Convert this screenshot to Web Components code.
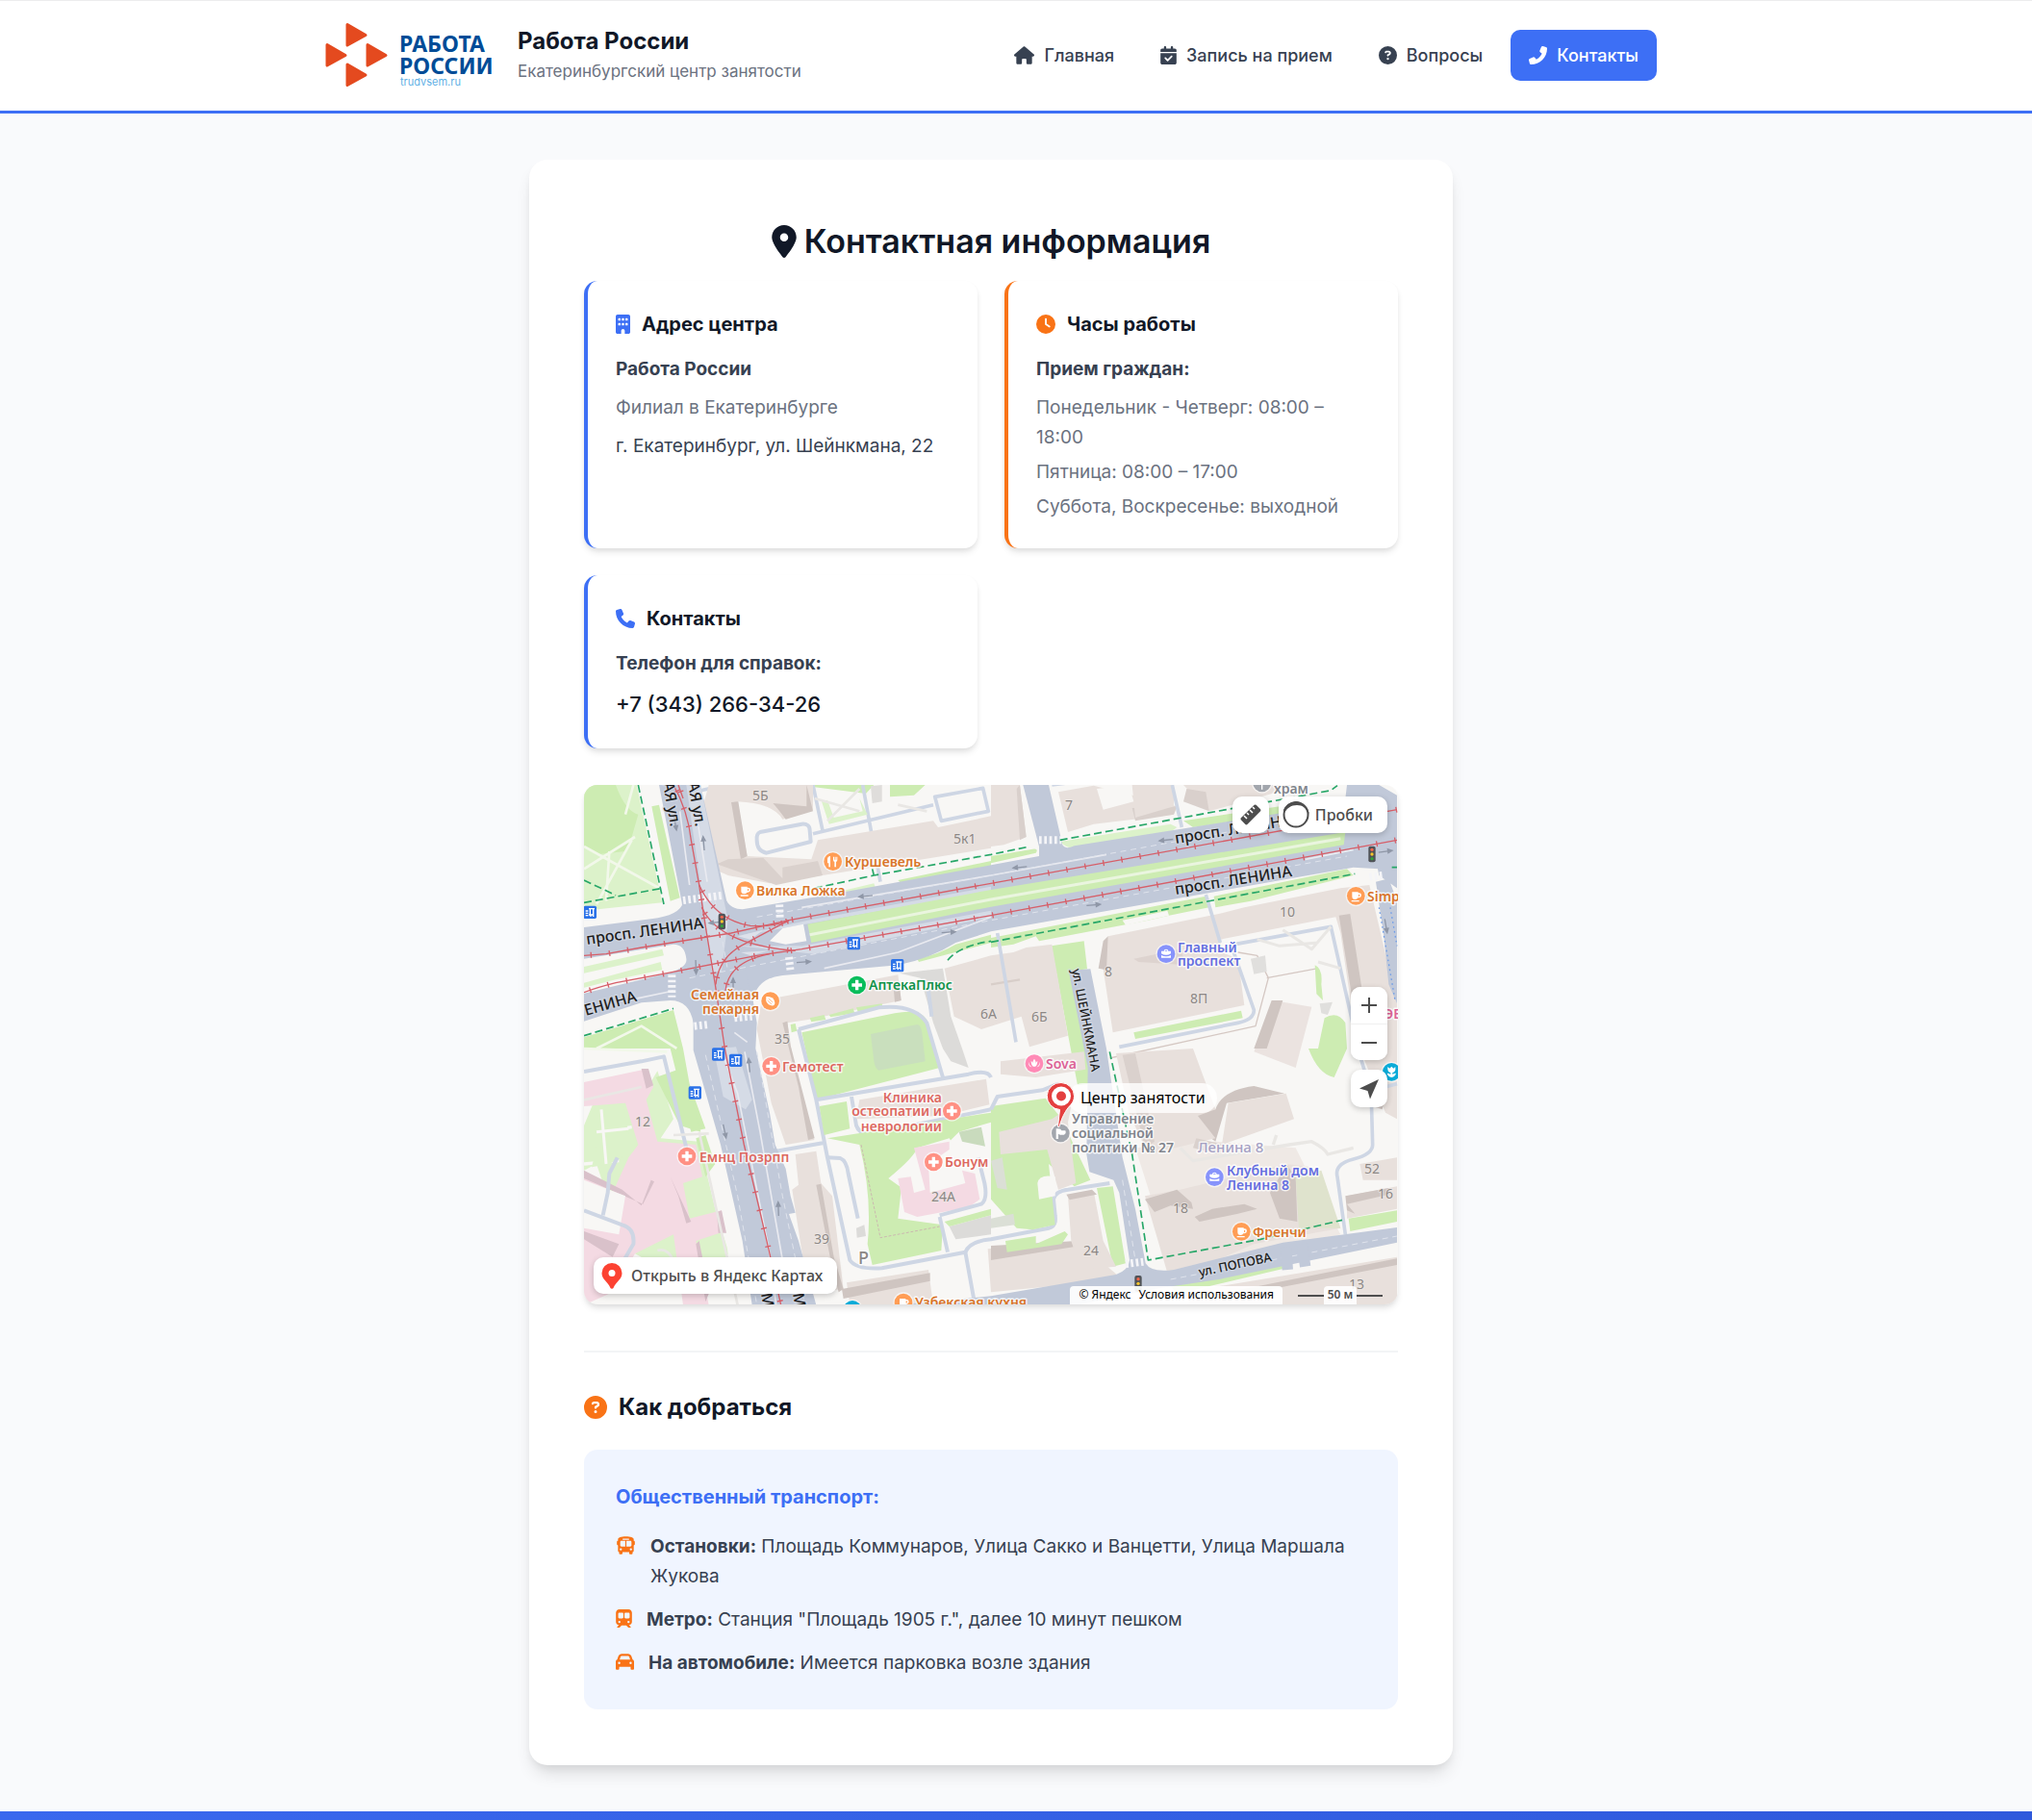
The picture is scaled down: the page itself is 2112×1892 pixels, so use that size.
<!DOCTYPE html>
<html lang="ru">
<head>
<meta charset="utf-8">
<meta name="viewport" content="width=device-width, initial-scale=1">
<title>Контакты — Работа России</title>
<style>
  :root {
    --blue: #3d6ff5; --orange: #f97316; --ink: #111827; --text: #374151; --muted: #6b7280;
    --side: 52px;
  }
  body { margin: 0; background: #f9fafc; color: var(--text); font: 400 19px/31px Inter, "Noto Sans", sans-serif; }
</style>
</head>
<body>
<page-shell>
  <site-header slot="header">
    <nav-link icon="house" href="#home">Главная</nav-link>
    <nav-link icon="calendar" href="#booking">Запись на прием</nav-link>
    <nav-link icon="question" href="#faq">Вопросы</nav-link>
    <nav-link icon="phone" href="#contacts" active>Контакты</nav-link>
  </site-header>
  <contact-panel>
    <info-card icon="building" accent="blue" heading="Адрес центра">
      <card-line kind="strong">Работа России</card-line>
      <card-line kind="muted">Филиал в Екатеринбурге</card-line>
      <card-line>г. Екатеринбург, ул. Шейнкмана, 22</card-line>
    </info-card>
    <info-card icon="clock" accent="orange" heading="Часы работы">
      <card-line kind="strong">Прием граждан:</card-line>
      <card-line kind="hours">Понедельник - Четверг: 08:00 – 18:00</card-line>
      <card-line kind="hours">Пятница: 08:00 – 17:00</card-line>
      <card-line kind="hours">Суббота, Воскресенье: выходной</card-line>
    </info-card>
    <info-card icon="phone" accent="blue" heading="Контакты">
      <card-line kind="strong">Телефон для справок:</card-line>
      <card-line kind="phone">+7 (343) 266-34-26</card-line>
    </info-card>
    <city-map slot="map"></city-map>
    <route-guide slot="route">
      <route-item icon="bus"><b>Остановки:</b> Площадь Коммунаров, Улица Сакко и Ванцетти, Улица Маршала Жукова</route-item>
      <route-item icon="metro"><b>Метро:</b> Станция "Площадь 1905 г.", далее 10 минут пешком</route-item>
      <route-item icon="car"><b>На автомобиле:</b> Имеется парковка возле здания</route-item>
    </route-guide>
  </contact-panel>
</page-shell>

<script>
const ICONS = {
  house: [576, 'M575.8 255.5c0 18-15 32.1-32 32.1h-32l.7 160.2c0 2.7-.2 5.4-.5 8.1V472c0 22.1-17.9 40-40 40H392c-22.1 0-40-17.9-40-40V384c0-17.7-14.3-32-32-32H256c-17.7 0-32 14.3-32 32v88c0 22.1-17.9 40-40 40H104c-22.1 0-40-17.9-40-40V287.6H32c-18 0-32-14-32-32.1c0-9 3-17 10-24L266.4 8c7-7 15-8 22-8s15 2 21 7L564.8 231.5c8 7 12 15 11 24z'],
  calendar: [448, 'M128 0c17.7 0 32 14.3 32 32V64H288V32c0-17.7 14.3-32 32-32s32 14.3 32 32V64h48c26.5 0 48 21.5 48 48v48H0V112C0 85.5 21.5 64 48 64H96V32c0-17.7 14.3-32 32-32zM0 192H448V464c0 26.5-21.5 48-48 48H48c-26.5 0-48-21.5-48-48V192zM329 305c9.4-9.4 9.4-24.6 0-33.9s-24.6-9.4-33.9 0l-95 95-47-47c-9.4-9.4-24.6-9.4-33.9 0s-9.4 24.6 0 33.9l64 64c9.4 9.4 24.6 9.4 33.9 0L329 305z'],
  question: [512, 'M256 512A256 256 0 1 0 256 0a256 256 0 1 0 0 512zM169.8 165.3c7.9-22.3 29.1-37.3 52.8-37.3h58.3c34.9 0 63.1 28.3 63.1 63.1c0 22.6-12.1 43.5-31.7 54.8L280 264.4c-.2 13-10.9 23.6-24 23.6c-13.3 0-24-10.7-24-24V250.5c0-8.6 4.6-16.5 12.1-20.8l44.3-25.4c4.7-2.7 7.6-7.7 7.6-13.1c0-8.4-6.8-15.1-15.1-15.1H222.6c-3.4 0-6.4 2.1-7.5 5.3l-.4 1.2c-4.4 12.5-18.2 19-30.6 14.6s-19-18.2-14.6-30.6l.4-1.2zM224 352a32 32 0 1 1 64 0 32 32 0 1 1 -64 0z'],
  phone: [512, 'M164.9 24.6c-7.7-18.6-28-28.5-47.4-23.2l-88 24C12.1 30.2 0 46 0 64C0 311.4 200.6 512 448 512c18 0 33.8-12.1 38.6-29.5l24-88c5.3-19.4-4.6-39.7-23.2-47.4l-96-40c-16.3-6.8-35.2-2.1-46.3 11.6L304.7 368C234.3 334.7 177.3 277.7 144 207.3L193.3 167c13.7-11.2 18.4-30 11.6-46.3l-40-96z'],
  pin: [384, 'M215.7 499.2C267 435 384 279.4 384 192C384 86 298 0 192 0S0 86 0 192c0 87.4 117 243 168.3 307.2c12.3 15.3 35.1 15.3 47.4 0zM192 128a64 64 0 1 1 0 128 64 64 0 1 1 0-128z'],
  clock: [512, 'M256 0a256 256 0 1 1 0 512A256 256 0 1 1 256 0zM232 120V256c0 8 4 15.5 10.7 20l96 64c11 7.4 25.9 4.4 33.3-6.7s4.4-25.9-6.7-33.3L280 243.2V120c0-13.3-10.7-24-24-24s-24 10.7-24 24z'],
  building: [384, 'M48 0C21.500 0 0 21.500 0 48V464c0 26.500 21.500 48 48 48h96V432c0-26.500 21.500-48 48-48s48 21.500 48 48v80h96c26.500 0 48-21.500 48-48V48c0-26.500-21.500-48-48-48zM80 96h32q16 0 16 16v32q0 16-16 16H80q-16 0-16-16v-32q0-16 16-16zm96 0h32q16 0 16 16v32q0 16-16 16h-32q-16 0-16-16v-32q0-16 16-16zm96 0h32q16 0 16 16v32q0 16-16 16h-32q-16 0-16-16v-32q0-16 16-16zM80 224h32q16 0 16 16v32q0 16-16 16H80q-16 0-16-16v-32q0-16 16-16zm96 0h32q16 0 16 16v32q0 16-16 16h-32q-16 0-16-16v-32q0-16 16-16zm96 0h32q16 0 16 16v32q0 16-16 16h-32q-16 0-16-16v-32q0-16 16-16z'],
  bus: [576, 'M288 0C422.4 0 512 35.2 512 80V128c17.7 0 32 14.3 32 32v64c0 17.7-14.3 32-32 32l0 160c0 17.7-14.3 32-32 32v32c0 17.7-14.3 32-32 32H416c-17.7 0-32-14.3-32-32V448H192v32c0 17.7-14.3 32-32 32H128c-17.7 0-32-14.3-32-32l0-32c-17.7 0-32-14.3-32-32l0-160c-17.7 0-32-14.3-32-32V160c0-17.7 14.3-32 32-32V80C64 35.2 153.6 0 288 0zM128 160v96c0 17.7 14.3 32 32 32H272V128H160c-17.7 0-32 14.3-32 32zM304 288H416c17.7 0 32-14.3 32-32V160c0-17.7-14.3-32-32-32H304V288zM144 400a32 32 0 1 0 0-64 32 32 0 1 0 0 64zm288 0a32 32 0 1 0 0-64 32 32 0 1 0 0 64zM384 80c0-8.8-7.2-16-16-16H208c-8.8 0-16 7.2-16 16s7.2 16 16 16H368c8.8 0 16-7.2 16-16z'],
  metro: [448, 'M96 0C43 0 0 43 0 96V352c0 48 35.2 87.7 81.1 94.9l-46 46C28.1 499.9 33.1 512 43 512H82.7c8.5 0 16.6-3.4 22.6-9.4L160 448H288l54.6 54.6c6 6 14.1 9.4 22.6 9.4H405c10 0 15-12.1 7.9-19.1l-46-46c46-7.1 81.1-46.9 81.1-94.9V96c0-53-43-96-96-96H96zM64 128c0-17.7 14.3-32 32-32h80c17.7 0 32 14.3 32 32v96c0 17.7-14.3 32-32 32H96c-17.7 0-32-14.3-32-32V128zM272 96h80c17.7 0 32 14.3 32 32v96c0 17.7-14.3 32-32 32H272c-17.7 0-32-14.3-32-32V128c0-17.7 14.3-32 32-32zM64 352a32 32 0 1 1 64 0 32 32 0 1 1 -64 0zm288-32a32 32 0 1 1 0 64 32 32 0 1 1 0-64z'],
  car: [512, 'M135.2 117.4L109.1 192H402.9l-26.1-74.6C372.3 104.6 360.2 96 346.6 96H165.4c-13.6 0-25.7 8.6-30.2 21.400zM39.6 196.8L74.8 96.3C88.3 57.8 124.6 32 165.4 32H346.6c40.8 0 77.1 25.8 90.6 64.3l35.2 100.5c23.2 9.6 39.6 32.5 39.6 59.2V448c0 17.7-14.3 32-32 32H448c-17.7 0-32-14.3-32-32V400H96v48c0 17.7-14.3 32-32 32H32c-17.7 0-32-14.3-32-32V256c0-26.7 16.4-49.6 39.6-59.2zM128 288a32 32 0 1 0 -64 0 32 32 0 1 0 64 0zm288 32a32 32 0 1 0 0-64 32 32 0 1 0 0 64z']
};
const icon = (name, size) => {
  const [w, d] = ICONS[name];
  return `<svg class="icon" aria-hidden="true" viewBox="0 0 ${w} 512" width="${Math.round(size * w / 512)}" height="${size}"><path fill="currentColor" fill-rule="evenodd" d="${d}"/></svg>`;
};
const define = (name, render) => customElements.define(name, class extends HTMLElement {
  constructor() { super(); this.attachShadow({ mode: 'open' }); }
  connectedCallback() { this.shadowRoot.innerHTML = render(this); }
});

define('page-shell', () => `
<style>
  :host { display: flex; flex-direction: column; min-height: 100vh; }
  main { flex: none; padding: 48px calc(20px + var(--side)) 48px 20px; }
  footer { flex: 1 0 9px; background: linear-gradient(90deg, #3a68ee, #2f59dc); }
</style>
<slot name="header"></slot>
<main><slot></slot></main>
<footer></footer>`);

define('site-header', () => `
<style>
  :host { display: block; background: #fff; border-top: 1px solid #ececee; border-bottom: 3px solid var(--blue); padding: 0 calc(20px + var(--side)) 2px 20px; }
  .bar { display: flex; align-items: center; justify-content: space-between; max-width: 1384px; height: 112px; margin: 0 auto; }
  .brand { display: flex; align-items: center; gap: 24px; color: inherit; text-decoration: none; }
  .name { display: block; font-weight: 700; font-size: 24px; line-height: 34px; color: var(--ink); }
  .place { display: block; font-size: 17px; line-height: 28px; color: var(--muted); }
  nav { display: flex; gap: 10px; }
</style>
<header class="bar">
  <a class="brand" href="#home"><site-logo></site-logo><span><span class="name">Работа России</span><span class="place">Екатеринбургский центр занятости</span></span></a>
  <nav><slot></slot></nav>
</header>`);

define('site-logo', () => `
<style>:host { display: block; } svg { display: block; }
 .w { font: 700 23px "Noto Sans", sans-serif; fill: #004c97; } .u { font: 400 11px Inter, sans-serif; fill: #5fb0e5; }</style>
<svg width="176" height="68" viewBox="0 0 176 68" role="img" aria-label="Работа России">
  <g fill="#e44a1f" stroke="#e44a1f" stroke-width="3" stroke-linejoin="round">
    <path d="M23 2.500 42 13.500 23 24z"/><path d="M2 23.500 21 34.500 2 45z"/><path d="M44 23.500 63 34.500 44 45z"/><path d="M23 44 42 55 23 65.500z"/>
  </g>
  <text class="w" x="77" y="31">РАБОТА</text><text class="w" x="77" y="54">РОССИИ</text><text class="u" x="78" y="66">trudvsem.ru</text>
</svg>`);

define('nav-link', el => `
<style>
  :host { display: block; }
  a { display: flex; align-items: center; gap: 10px; padding: 0 19px; height: 53px; border-radius: 10px; font-weight: 500; font-size: 18px; color: var(--text); text-decoration: none; white-space: nowrap; }
  :host([active]) a { background: var(--blue); color: #fff; }
  :host([active]) svg { transform: scaleX(-1); }
</style>
<a href="${el.getAttribute('href')}">${icon(el.getAttribute('icon'), 19)}<span><slot></slot></span></a>`);

define('contact-panel', () => `
<style>
  :host { display: block; max-width: 846px; margin: 0 auto; padding: 58px 57px; background: #fff; border-radius: 19px; box-shadow: 0 12px 18px -4px rgba(0,0,0,.12), 0 5px 8px -2px rgba(0,0,0,.06); }
  h1 { display: flex; justify-content: center; align-items: center; gap: 8px; margin: 0 0 14px; font-size: 34px; line-height: 54px; font-weight: 600; color: var(--ink); }
  .grid { display: grid; grid-template-columns: 1fr 1fr; gap: 28px; margin-bottom: 38px; }
</style>
<h1>${icon('pin', 34)}<span>Контактная информация</span></h1>
<div class="grid"><slot></slot></div>
<slot name="map"></slot>
<slot name="route"></slot>`);

define('info-card', el => `
<style>
  :host { display: block; padding: 29px 29px 28px; border-left: 4px solid var(--${el.getAttribute('accent')}); border-radius: 14px; background: #fff; box-shadow: 0 5px 7px -1px rgba(0,0,0,.1), 0 2px 5px -1px rgba(0,0,0,.06); }
  h3 { display: flex; align-items: center; gap: 12px; margin: 0 0 15px; font-size: 20px; line-height: 32px; font-weight: 700; color: var(--ink); }
  .icon { color: var(--${el.getAttribute('accent')}); }
  .lines { display: flex; flex-direction: column; }
</style>
<h3>${icon(el.getAttribute('icon'), 20)}<span>${el.getAttribute('heading')}</span></h3>
<div class="lines"><slot></slot></div>`);

define('card-line', el => {
  const phone = el.getAttribute('kind') === 'phone';
  return `
<style>
  :host { display: block; margin-bottom: 9px; }
  :host(:last-child) { margin-bottom: 0; }
  :host([kind=strong]) { font-weight: 700; }
  :host([kind=muted]), :host([kind=hours]) { color: var(--muted); }
  :host([kind=hours]:not(:last-child)) { margin-bottom: 5px; }
  a { display: block; color: var(--ink); font-weight: 500; font-size: 22px; line-height: 36px; text-decoration: none; }
</style>${phone ? '<a href="tel:+73432663426"><slot></slot></a>' : '<slot></slot>'}`;
});

define('route-guide', () => `
<style>
  :host { display: block; margin-top: 48px; padding-top: 38px; border-top: 2px solid #f3f4f6; }
  h2 { display: flex; align-items: center; gap: 12px; margin: 0 0 25px; font-size: 24px; line-height: 38px; font-weight: 700; color: var(--ink); }
  .icon { color: var(--orange); }
  .box { padding: 33px; border-radius: 14px; background: #f0f5ff; }
  h3 { margin: 0 0 20px; font-size: 20px; line-height: 32px; font-weight: 700; color: var(--blue); }
  .list { display: flex; flex-direction: column; gap: 14px; }
</style>
<h2>${icon('question', 24)}<span>Как добраться</span></h2>
<div class="box"><h3>Общественный транспорт:</h3><div class="list" role="list"><slot></slot></div></div>`);

define('route-item', el => `
<style>
  :host { display: flex; align-items: flex-start; gap: 15px; }
  ::slotted(b) { font-weight: 700; }
  .icon { flex: none; margin-top: 5px; color: var(--orange); }
</style>${icon(el.getAttribute('icon'), 19)}<span><slot></slot></span>`);

/* ---- map ---------------------------------------------------------------
   Geometry is drawn on a fine grid, three units to a pixel, with the
   origin at (21, 18); labels sit on the pixel grid. */
const px = v => Math.round(v / 3 - 7), py = v => Math.round(v / 3 - 6);
const P = (fill, ...d) => `<path fill="${fill}" d="${d.join('')}"/>`;
const L = (stroke, w, d, extra = '') => `<path fill="none" stroke="${stroke}" stroke-width="${w}" stroke-linejoin="round" d="${d}" ${extra}/>`;
const G = '#cdecb2', G2 = '#dcf2ca', B = '#e8e0dc', S = '#cfc5c1', R = '#c1c9d9', D = '#ced6e4', PK = '#f4dae3', PS = '#d9c1ca', W = '#f8f7f5', GR = '#e9e7e4';
const GLYPH = {
  cup: '<path fill="#fff" d="M-12-12h19v3h3q7 0 7 7t-8 8h-3q-2 5-9 5-9 0-9-9zM8-5v7q4 0 4-4 0-3-4-3zM-14 14h24v4h-24z"/>',
  food: '<path fill="#fff" d="M-8-17v34h-5V5h-4v-12q0-9 9-10zM1-15h3v9h2v-9h3v9h2v-9h3v10q0 5-4 6v16H5V1Q1 0 1-5z"/>',
  plus: '<path fill="#fff" d="M-5-16H5V-5h11V5H5v11H-5V5h-11V-5h11z"/>',
  bag: '<path fill="#fff" d="M-7-9q0-6 7-6t7 6h8v8q-15 9-30 0v-8zm3 0h8q0-3-4-3t-4 3zM-15 4q15 7 30 0v8h-30z"/>',
  bread: '<path fill="#fff" d="M-13-14q24-2 27 18 1 12-11 10-20-4-16-28z"/><path stroke="#ff9d55" stroke-width="2" d="M-6-8 8 4M-9-2 4 10"/>',
  lotus: '<path fill="#fff" d="M0-15q7 8 4 20 0-11 6-14 0 14-7 18h-6q-7-4-7-18 6 3 6 14-3-12 4-20zM-18-6q3 13 11 17-12-1-11-17zM18-6Q15 7 7 11q12-1 11-17z"/>',
  flag: '<path fill="#fff" d="M-14-14h7v32h-7zM-7-14q8 0 10 6h12q4 10-5 13-10 2-17-3z"/>',
  tulip: '<path fill="#fff" d="M-12-16l6 5 6-6 6 6 6-5q2 17-9 18v6q4-4 11-4-2 10-14 13Q-12 14-14 4q7 0 11 4V2q-11-2-9-18z"/>',
  cross: '<path fill="#fff" d="M-2-2h4v22h-4z"/>'
};
const poi = (x, y, c, g) => `<g transform="translate(${x} ${y})"><circle r="32" fill="#fff" opacity=".6"/><circle r="28" fill="${c}"/>${GLYPH[g]}</g>`;
const stop = (x, y) => `<g transform="translate(${x} ${y})"><rect x="-20" y="-20" width="40" height="40" rx="5" fill="#2b72e8"/><path fill="none" stroke="#fff" stroke-width="4" d="M-4-11H14M0-11V8M10-11V8M-4 8h16M2 8v6M10 8v6M-14-4h8M-14 3h8M-14 10h8"/></g>`;
const lights = (x, y) => `<g transform="translate(${x} ${y})"><rect x="-11" y="-24" width="22" height="50" rx="6" fill="#505358"/><circle cy="-13" r="5" fill="#f0664c"/><circle cy="1" r="5" fill="#f5c52c"/><circle cy="15" r="5" fill="#35a13b"/></g>`;
const arrow = (x, y, a) => `<path transform="translate(${x} ${y}) rotate(${a})" fill="#8f97a7" d="M-24-2H4v-7L24 0 4 9V2h-28z"/>`;
const label = (x, y, t, cls, a = 0, end = false) => `<text class="${cls}" x="${px(x)}" y="${py(y)}"${a ? ` transform="rotate(${a} ${px(x)} ${py(y)})"` : ''}${end ? ' text-anchor="end"' : ''}>${t}</text>`;

const lenina = 'M21 462 230 436Q320 425 330 385L466 380Q480 405 515 406L800 358 1290 268 1440 240 1440 190 1510 190Q1510 225 1550 208L2280 92Q2400 70 2556 60V215L2500 225 2500 280 2420 275 1290 475 1180 510Q1100 560 1000 580L640 612Q560 620 548 690L545 760 362 760Q350 690 290 690L200 697 21 755V668L270 608Q345 590 340 560 335 515 300 515L21 560z';
const street = 'M255 18H384L466 380 548 690 560 760 556 840 600 1040 617 1140 650 1215 665 1300 680 1352 660 1356 690 1440 745 1640H545L515 1440 465 1220 447 1140 362 845 362 740 345 560 326 385z';
const schein = 'M1532 597 1600 592 1650 840 1700 1180 1740 1340 1772 1510Q1790 1540 1860 1530L2200 1445 2556 1398V1445L2000 1560 1800 1590 1560 1640H1000L1290 1612 1680 1545Q1720 1530 1722 1500L1690 1290 1672 1250 1597 1225 1588 1170 1592 900z';

const land = [
  P(G2, 'M21 18H185L265 385 21 410z'), P(G, 'M21 18H120Q150 100 190 110L170 180 150 225 60 235 21 210z'),
  P(G, 'M232 85 255 80 320 370 290 380z'),
  L('#f2f8ea', 8, 'M21 210 265 345M100 225 90 380M170 190 60 390M21 280 180 180M150 110 175 18'),
  P(G2, 'M21 585 265 530 270 550 21 605zM21 635 260 570 265 595 120 625 21 650z'),
  P(G, 'M21 805 300 720 330 840H21zM290 840H330L350 950 400 1090 355 1100Z'), L('#f2f8ea', 8, 'M60 840 200 770 310 840M21 840 280 850'),
  P(G, 'M740 18H925L900 45 740 25zM975 18H1085L1050 50 975 55z'), L(D, 11, 'M735 18 765 160M890 18 945 320M385 35 500 10M735 170 1110 80M1115 55 1265 28 1282 100 1135 130Z'),
  P(G2, 'M762 70 780 65 800 120 890 100 880 60 905 110 785 140z'), L(GR, 8, 'M740 60 880 100M780 130 880 30M1000 80 1090 100'),
  P('#dfdddb', 'M915 22 950 18V70L920 75z'),
  P(B, 'M410 18H735V95L640 125Q610 75 500 70L530 240 730 250 750 190 1110 130 1125 150 1290 115V215L1125 242 765 300 600 325 470 300 425 280 390 90z'),
  P(S, 'M715 18 735 100 650 125Q620 85 610 75L715 85zM480 72 502 70 530 240 510 250z', ''), P('#dad1cd', 'M435 265 620 330 765 300 750 255 640 275 640 310 580 245 470 250z'),
  L(D, 12, 'M570 165 700 140Q725 138 725 160L728 195 590 230Q560 225 560 190 558 170 570 165z'),
  P(G2, 'M750 370 840 345 925 325 932 345z'), P(G, 'M1000 315 1290 255V285L1010 325z'),
  /* north-east blocks */
  P(B, 'M1290 18H1380L1400 180 1330 205 1290 210zM1500 40 1610 20 1870 85 1860 110 1610 140 1530 165zM1890 18H2260L2080 70 1970 100z'), P('#d9d0cc', 'M1370 30 1380 18 1400 180 1380 190zM1730 90 1870 85 1860 110 1740 130zM1900 30 1960 40 1970 100 1890 70z'),
  P(B, 'M1730 18H1860V85L1740 120z'), P(W, 'M1620 30 1720 18 1735 70 1640 95z'),
  P(G2, 'M1505 195 1850 140 1870 150 1850 165 1560 215Q1530 220 1505 195z'), P(G, 'M1890 130 2390 55 2390 85 1920 150zM1290 240 1420 218Q1440 215 1430 230L1290 262zM2380 90 2430 80 2440 170 2390 175z'),
  L(D, 11, 'M1855 18 1885 150M1480 18 1580 5'),
  /* blocks south of the avenue */
  P(G, 'M1060 560Q1130 545 1180 515L1290 485 1290 510 1065 570z'),
  P(G, 'M1290 495 1960 365 1970 400 1845 425 1780 440 1440 505 1430 490 1360 515 1290 525z'), P(W, 'M1700 440 1840 410 1845 425 1710 455z'), P(G, 'M1985 365 2400 280 2420 300 2100 380 1990 400z'),
  P(G, 'M1478 520 1580 505 1590 592 1535 600 1585 840 1600 950 1560 955z'),
  P(B, 'M575 690 1000 610 1010 690 720 750 655 760 665 830 720 1100 740 1125 650 1140 605 1010 560 780z'), P(S, 'M985 635 1003 630 1010 690 990 695zM640 760 655 755 665 830 740 1120 720 1125 690 960z'),
  P('#dcdbd9', 'M1005 605 1140 590 1165 740 1200 840 1220 900 1165 880 1140 840 1110 760 1070 620z'),
  P(B, 'M1145 590 1290 550 1360 540 1400 525 1480 515 1530 800 1410 835 1385 740 1260 780 1175 740z'), L('#d8cec9', 7, 'M1290 640 1380 625'),
  P(G, 'M700 790 990 730Q1070 715 1090 750L1130 900 745 1000zM665 765 680 762 685 785 668 790zM725 745 770 735 775 750 730 757zM785 735 860 715 865 730 790 742zM870 712 950 700 952 712 875 725z'), P('#c9dfbd', 'M915 795 1060 765Q1070 765 1075 790L1085 880 940 908Q930 905 925 880z'),
  L(D, 12, 'M690 780 940 712Q1050 700 1090 760L1140 930M690 780 745 1000 780 1180 850 1500Q870 1530 950 1525L1210 1475 1240 1640M745 1000 1220 920Q1280 905 1290 930M855 990 870 1080Q880 1110 920 1105L1290 1030M620 1160 765 1135M1095 660 1105 740'),
  P(G, 'M755 1020 840 1005 850 1090 770 1110zM780 1120 1290 1040 1290 1070 1190 1100 1010 1280 1000 1370 1140 1390 1135 1470 920 1515 905 1450Q920 1300 880 1140z'),
  P(W, 'M970 1245Q1050 1180 1060 1150L1160 1120 1210 1200 1190 1260 1090 1280 1005 1270z'),
  P(PK, 'M1050 1150 1160 1130 1160 1155 1095 1200 1100 1290 1210 1260 1200 1220 1240 1230 1255 1310 1220 1335 1060 1365 1020 1350 1000 1245 1040 1240 1050 1290 1085 1280z'),
  P('#c9dbbd', 'M1190 1100 1260 1085 1272 1145 1200 1130z'), P(B, 'M880 1000 1275 935 1285 1015 1140 1050 870 1060z'),
  L('#cbb9b0', 3, 'M885 1140 945 1430 1130 1395', 'stroke-dasharray="9 5"'),
  L(D, 12, 'M780 1180 820 1182Q840 1190 845 1230L875 1370M1130 1360 1260 1325Q1280 1310 1270 1260L1250 1180M1130 1365 1155 1475M1210 1475Q1225 1440 1290 1435L1470 1400Q1495 1395 1490 1360L1485 1310Q1490 1285 1530 1280L1660 1260'),
  P(B, 'M680 1170 745 1160 760 1260 795 1300 830 1590 720 1600 670 1280 690 1265zM840 1570 1095 1530 1110 1640H850zM1280 1465 1560 1440 1700 1560 1290 1600z'), P(S, 'M745 1265 760 1262 800 1490 830 1590 815 1600 790 1500zM825 1590 1100 1540 1100 1565 830 1620zM1290 1455 1560 1440 1570 1455 1290 1500z'),
  P('#dcdbd9', 'M1160 1395 1290 1360V1420L1180 1435zM870 1400 895 1390 900 1425 872 1430z'), P(G, 'M1145 1380 1290 1340 1290 1360 1160 1395zM1335 1440 1430 1425 1430 1450 1520 1410 1530 1420 1510 1450 1340 1475z'),
  /* west block, hospital */
  P(G2, 'M50 1010 160 1000 220 960 250 910 300 1060 260 1120 380 1130 430 1340 467 1460 470 1480 400 1600 180 1480 110 1350 60 1200 21 1220V1080z'),
  P(G, 'M245 930 330 900 385 1100 320 1080zM370 1120 400 1110 430 1200 400 1240z'), L(W, 10, 'M70 1100 170 1085M60 1070 100 1160M21 1200 130 1190'),
  P(PK, 'M21 945 220 903 237 960 215 1000 250 1130 370 1140 390 1240 330 1260 350 1370 450 1345 460 1410 370 1440 410 1640H330L300 1420 180 1480 110 1600 21 1640V1220L110 1290 160 1180 190 1140 150 1010 21 1020z'),
  P(PS, 'M200 903 222 903 237 955 215 965zM21 1220 140 1280 200 1330 230 1250 240 1255 205 1325 21 1245zM21 1410 130 1450 110 1490 21 1435zM290 1240 355 1380 340 1385 315 1300zM435 1350 450 1345 465 1415 440 1415zM380 1440 412 1600 400 1630 370 1450z'),
  P(G2, 'M50 1030 140 1010 155 1080 175 1160 100 1200 45 1210 60 1150z'), L(W, 9, 'M60 1100 160 1090M75 1030 90 1200'), P(W, 'M21 1250 150 1300 130 1420 21 1400z'),
  L(D, 12, 'M21 912 200 880 270 865 345 1170M21 1345 140 1390Q180 1400 175 1450L110 1560M125 1180 100 1230 95 1290 80 1360'),
  L(GR, 8, 'M21 1000 200 960M300 1110 410 1105M250 1470Q280 1460 300 1500M380 1100 500 1640'),
  /* middle and east blocks */
  P(B, 'M1635 560 1655 490 2000 420 2080 400 2380 340 2470 330 2556 700 2556 1060 2520 1040 2440 840 2405 650 2380 480 2365 430 2005 500 2010 540 2060 560 2080 705 1670 790z'),
  P(S, 'M1625 590 1640 505 1655 490 1650 595zM2375 425 2410 420 2460 740 2430 770zM2470 950 2520 990 2510 1030 2480 1020z'), P('#ddd3cf', 'M1735 560 1880 530 1900 580 1750 570z'),
  P(G, 'M1735 790 2070 722 2075 745 1740 810z'), L(D, 11, 'M1960 360 2005 510M2050 515 2350 460 2440 860 2470 960M2040 520 2110 720Q2110 750 2060 760L1690 835M1310 480 1368 820M2475 960 2480 1140Q2480 1170 2420 1185 2360 1200 2370 1240L2395 1420M2480 970 2556 950'),
  L('#d5c8c3', 4, 'M2060 540 2120 550 2155 620 2115 770 1660 870M2150 620 2310 590'), L(GR, 9, 'M2200 470 2290 530 2350 460M2120 500 2190 520 2310 510M2310 570 2380 590'),
  P('#e0dfdd', 'M2100 560 2145 550 2150 600 2110 608zM2315 700 2355 695 2340 735 2320 730z'), P(G, 'M2300 580Q2325 590 2320 640L2325 690 2305 670zM2310 840 2330 745Q2370 720 2395 760L2400 840 2360 930Q2310 920 2280 840z'),
  P('#ebe3e0', 'M2110 850 2170 690 2290 710 2240 900z'), P(S, 'M2110 840 2165 690 2200 690 2150 840zM1935 1030 1990 1030Q2010 970 2110 957L2205 980 2025 1010 1990 1130 1935 1090z'),
  P('#efe9e5', 'M1740 1150 1990 1130 2240 1150 2290 1250 2380 1420 2050 1520 1870 1560z'), P(B, 'M1680 855 1920 840 1990 1030 1935 1050 1990 1120 1780 1170 1720 1040zM2030 1010 2210 980 2235 1060 2010 1140z'),
  P('#dad1cd', 'M1700 860 1740 855 1800 1130 1770 1150zM1930 1120 2020 1140 2000 1170 1920 1150z'), P(B, 'M1770 1300 1880 1280 2210 1200 2290 1210 2380 1400 2110 1450 1880 1550 1840 1540z'), P(S, 'M1770 1310 1870 1280 1915 1320 1920 1340 1850 1330 1800 1350zM1925 1365 1980 1340 2080 1325 2120 1340 2060 1355 1940 1380zM2190 1240 2210 1200 2240 1240 2245 1380 2190 1370 2160 1290z'),
  L(GR, 10, 'M1880 1150 1920 1190 2220 1140 2290 1130Q2330 1150 2340 1170L2420 1150M2170 1140 2180 1110'), P('#dfe3cd', 'M2240 1240 2320 1220 2380 1400 2250 1400z'),
  P(B, 'M2440 1200 2556 1180V1250L2450 1250zM2400 1300 2556 1270V1340L2400 1370zM1950 1590 2556 1490V1640H1900z'), P(S, 'M2395 1300 2530 1275 2530 1295 2400 1325 2425 1355 2400 1345zM2030 1600 2556 1495V1515L2060 1610z'), P(G, 'M2405 1370 2556 1345V1380L2410 1410zM1850 1580 2200 1510 2210 1525 1870 1605z'),
  /* around the employment centre */
  P(G, 'M1290 1020 1460 995 1510 1060 1600 1250 1550 1270 1470 1200 1490 1390 1420 1405 1370 1400 1290 1310z'), P(B, 'M1315 1100 1480 1060 1540 1020 1530 1070 1555 1260 1500 1280 1465 1155 1320 1170zM1320 880 1580 850 1585 905 1430 930 1320 920z'),
  P('#dbdfd6', 'M1290 1190 1325 1180 1340 1280 1310 1275zM1290 1370 1360 1355 1365 1390 1290 1400z'), L(D, 12, 'M1290 1030 1310 990 1450 970 1500 950M1310 990 1290 1030'),
  P(W, 'M1435 1260Q1440 1230 1490 1240L1490 1300 1440 1310z'), P(G, 'M1620 1275 1670 1270 1710 1510 1670 1520z'), P(B, 'M1530 1300 1610 1285 1640 1440 1680 1520 1570 1530 1540 1440z'), P(S, 'M1525 1295 1605 1280 1620 1295 1535 1312z')
].join('');

const roads = [
  P(R, 'M1390 18H1470L1512 200 1440 210z'), P(R, 'M2400 18H2500L2556 50V120L2480 170 2440 90 2395 60zM2480 200 2556 200V340L2500 300zM2490 320 2530 310 2556 380V700L2530 640 2515 490z'),
  P(R, lenina), P(R, street), P(R, schein),
  P('#d5dbe6', 'M340 18 384 18 470 440 450 600 420 600 400 440zM425 840 495 835 545 1000 525 1030 455 990zM500 490 1290 350V335L720 440zM500 520 740 545 1290 430V410L700 520z'),
  P(G, 'M718 452 1290 345 2395 165 2390 205 1290 398 730 510z'), L('#eaf5df', 9, 'M725 485 1290 375 2380 185'), P(W, 'M640 465 705 452 715 505 650 515 600 505z'),
  L('#e9eaf0', 5, 'M320 100 350 330M375 130 405 320M450 850 500 980 600 1480 620 1640M522 850 570 1100 640 1500M700 400 1290 300M770 590 1000 540 1290 430M1290 300 1650 235M2270 250 2420 220M180 685 300 660M490 790 530 820'),
  L('#dfe3ec', 3, 'M400 860 500 1300 560 1640M560 850 640 1300 710 1640M430 380 470 600M350 620 1290 440 2400 240M560 430 1290 300 2300 115M1700 1250 1740 1500M1850 1560 2556 1425', 'stroke-dasharray="18 14"'),
  L('#f5f5f8', 24, 'M330 378 455 362M630 375 632 435M295 610 295 680M365 770 410 765M490 745 545 740M660 555 665 600M1440 190 1510 190M1710 1512 1765 1505M2470 305 2510 300', 'stroke-dasharray="8 8"'),
  L(R, 34, 'M2210 1460 2215 1530M2260 1450 2270 1520'),
  P('#dde1ea', 'M500 490 580 470 540 500zM510 540 600 535 540 550z')
].join('');
const rails = ['M300 18Q345 100 355 190L380 330 400 460 430 640 460 840 520 1140 570 1350 600 1480 635 1640', 'M315 18 330 60', 'M21 550 90 545 200 525 480 480 660 440 1290 325 2556 95', 'M21 665Q60 650 120 635L280 605 560 550 700 530 1290 425 2556 190', 'M380 330Q430 440 540 457 600 462 660 443', 'M388 400Q420 470 520 505 600 530 680 535', 'M432 640Q440 560 510 520L660 440', 'M462 660Q470 570 600 545']
  .map(d => L('#d65f69', 4, d) + L('#d65f69', 18, d, 'stroke-dasharray="4 54" stroke-dashoffset="-20"')).join('');
const walks = ['M190 18 270 390', 'M21 385 265 340', 'M21 315 120 362', 'M740 340 925 300 1290 235 1410 210', 'M925 300 920 280', 'M1505 190 2350 35 2370 20', 'M1290 508 2425 295', 'M21 800 300 715', 'M1155 565Q1190 520 1290 505', 'M1660 850 1730 1170 1780 1500 2130 1435 2385 1375', 'M2540 275H2556']
  .map(d => L('#27a768', 5, d, 'stroke-dasharray="24 12"')).join('');
const marks = [
  L('#6f9de8', 4, 'M2500 400 2550 690M2535 400 2556 520', 'stroke-dasharray="5 10"'),
  arrow(394, 198, -95), arrow(306, 140, 80), arrow(897, 365, 174), arrow(1160, 477, -4), arrow(708, 570, -4), arrow(370, 588, 88), arrow(486, 640, -90), arrow(430, 447, 174), arrow(1378, 275, 174), arrow(1834, 190, 174), arrow(1612, 392, -5), arrow(2522, 225, -8), arrow(2522, 460, 80), arrow(460, 1100, 78), arrow(536, 890, -95), arrow(627, 1338, -92),
  lights(451, 443), lights(2478, 233), lights(1749, 1572), stop(40, 415), stop(862, 512), stop(998, 581), stop(440, 858), stop(494, 877), stop(367, 978),
  poi(797, 257, '#ff9d55', 'food'), poi(523, 347, '#ff9d55', 'cup'), poi(602, 692, '#ff9d55', 'bread'), poi(872, 642, '#08bd5b', 'plus'), poi(1836, 545, '#8793fb', 'bag'), poi(2428, 364, '#ff9d55', 'cup'),
  poi(605, 895, '#ff9083', 'plus'), poi(1168, 1035, '#ff9083', 'plus'), poi(342, 1176, '#ff9083', 'plus'), poi(1111, 1194, '#ff9083', 'plus'), poi(1425, 887, '#ff8ab6', 'lotus'), poi(1507, 1104, '#a2a6ad', 'flag'), poi(1987, 1241, '#8793fb', 'bag'), poi(2071, 1411, '#ff9d55', 'cup'), poi(1017, 1632, '#ff9d55', 'cup'), poi(2135, 12, '#a2a6ad', 'cross'), poi(858, 1654, '#0aabd8', 'plus'), poi(2539, 913, '#0aabd8', 'tulip')
].join('');
const labels = [
  ...[[545,66,'5Б'],[1172,200,'5к1'],[614,825,'35'],[1256,746,'6А'],[1520,97,'7'],[2190,429,'10'],[1643,616,'8'],[1912,700,'8П'],[1415,757,'6Б'],[181,1083,'12'],[737,1450,'39'],[1105,1317,'24А'],[1578,1485,'24'],[1856,1354,'18'],[2453,1230,'52'],[2497,1308,'16'],[2406,1590,'13']].map(a => label(...a, 'num')),
  label(875, 1513, 'P', 'park'),
  label(833, 272, 'Куршевель', 'o'), label(558, 362, 'Вилка Ложка', 'o'), label(568, 686, 'Семейная', 'o', 0, true), label(568, 732, 'пекарня', 'o', 0, true), label(908, 656, 'АптекаПлюс', 'g'),
  label(1872, 540, 'Главный', 'v'), label(1872, 583, 'проспект', 'v'), label(2464, 381, 'Simple', 'o'), label(640, 911, 'Гемотест', 'r'),
  label(1137, 1007, 'Клиника', 'r', 0, true), label(1137, 1051, 'остеопатии и', 'r', 0, true), label(1137, 1098, 'неврологии', 'r', 0, true),
  label(380, 1193, 'Емнц Позрпп', 'r'), label(1147, 1210, 'Бонум', 'r'), label(1461, 904, 'Sova', 'p'),
  label(1543, 1074, 'Управление', 's'), label(1543, 1119, 'социальной', 's'), label(1543, 1165, 'политики № 27', 's'), label(1934, 1164, 'Ленина 8', 'l'),
  label(2024, 1235, 'Клубный дом', 'v'), label(2024, 1280, 'Ленина 8', 'v'), label(2107, 1427, 'Френчи', 'o'), label(1052, 1646, 'Узбекская кухня', 'o'), label(2172, 46, 'храм', 's'), label(2516, 747, 'ЭЕ', 'p'),
  label(30, 515, 'просп. ЛЕНИНА', 'st', -8), label(27, 737, 'ЕНИНА', 'st', -16), label(1867, 200, 'просп. ЛЕНИНА', 'st', -9), label(1867, 360, 'просп. ЛЕНИНА', 'st', -9),
  label(266, 12, 'АЯ ул.', 'st', 80), label(344, 12, 'АЯ ул.', 'st', 80), label(1543, 594, 'ул. ШЕЙНКМАНА', 'st sm', 79), label(1940, 1550, 'ул. ПОПОВА', 'st sm', -12), label(572, 1606, 'М', 'st', 80), label(672, 1606, 'М', 'st', 80)
].join('');

define('city-map', () => `
<style>
  :host { display: block; position: relative; height: 540px; overflow: hidden; border-radius: 14px; background: #f8f7f5; font-family: "Noto Sans", sans-serif; box-shadow: 0 5px 7px -1px rgba(0,0,0,.1), 0 2px 5px -1px rgba(0,0,0,.06); }
  .scene { display: block; width: 100%; height: 100%; }
  .scene text { font: 600 14px "Noto Sans", sans-serif; paint-order: stroke; stroke: #fff; stroke-opacity: .75; stroke-width: 3px; stroke-linejoin: round; }
  .scene .num { font-size: 14px; font-weight: 400; fill: #8c8785; stroke: #ece7e4; stroke-width: 2px; }
  .scene .park { font-size: 18px; font-weight: 500; fill: #8c8785; }
  .scene .o { fill: #d9752a; } .scene .g { fill: #11924a; } .scene .v { fill: #656fe0; } .scene .r { fill: #dd6961; }
  .scene .p { fill: #dc6296; } .scene .s { fill: #80848c; } .scene .l { fill: #a5a1c4; font-size: 15px; font-weight: 500; }
  .scene .st { font-size: 16px; font-weight: 500; fill: #1d1d20; stroke: #d4d9e4; stroke-opacity: .6; } .scene .sm { font-size: 13px; }
  .tools { position: absolute; display: flex; }
  .top { top: 12px; right: 11px; gap: 10px; }
  .zoom { right: 11px; top: 210px; flex-direction: column; width: 38px; border-radius: 10px; background: #fff; box-shadow: 0 2px 6px rgba(0,0,0,.2); }
  .zoom button { box-shadow: none; }
  .zoom button + button { border-top: 1px solid #f0f0f0; border-radius: 0 0 10px 10px; }
  .geo { right: 11px; top: 296px; }
  .open { left: 10px; bottom: 11px; }
  button, .open a { display: flex; align-items: center; justify-content: center; box-sizing: border-box; min-width: 38px; height: 38px; padding: 0; border: 0; border-radius: 10px; background: #fff; color: #4d4d4d; font: 500 16px "Noto Sans", sans-serif; text-decoration: none; box-shadow: 0 2px 6px rgba(0,0,0,.2); }
  .geo button { height: 39px; }
  .top button.jam { gap: 6px; padding: 0 15px 0 4px; }
  .open a { gap: 9px; padding: 0 15px 0 8px; }
  .balloon { position: absolute; left: calc(50% + 80px); top: 310px; height: 31px; padding: 0 12px 0 13px; border-radius: 16px; background: rgba(255,255,255,.8); color: #000; font-size: 16px; line-height: 31px; }
  .marker { position: absolute; left: calc(50% + 58px); top: 309px; }
  .legal { position: absolute; right: 120px; bottom: 0; display: flex; gap: 8px; height: 19px; padding: 0 9px; border-radius: 4px 4px 0 0; background: rgba(255,255,255,.92); font-size: 12px; line-height: 18px; }
  .legal a { color: #000; text-decoration: none; }
  .scale { position: absolute; right: 16px; bottom: 0; display: flex; align-items: center; height: 19px; width: 88px; font-size: 12px; font-weight: 600; line-height: 18px; color: #4d4d4d; }
  .scale::before, .scale::after { content: ""; flex: 1; height: 2px; background: #4d4d4d; }
  .scale span { height: 19px; padding: 0 4px; border-radius: 4px 4px 0 0; background: rgba(255,255,255,.9); }
</style>
<svg class="scene" viewBox="0 0 846 540" preserveAspectRatio="xMidYMid slice" role="img" aria-label="Карта района">
  <g transform="translate(-7 -6) scale(.333333)">${land}${roads}${walks}${rails}${marks}</g>
  ${labels}
</svg>
<span class="balloon">Центр занятости</span>
<svg class="marker" width="30" height="48" viewBox="0 0 30 48" aria-hidden="true"><path fill="#e43f3f" stroke="#fff" stroke-width="1" d="M15 .5a14 14 0 0 1 13.500 14c0 8-6 10-9 16-3 5-5 10-6.500 16h-1.500l2-18A14 14 0 0 1 15 .5z"/><circle cx="15" cy="14.500" r="10" fill="#fff"/><circle cx="15" cy="14.500" r="5" fill="#e43f3f"/></svg>
<div class="tools top">
  <button type="button" aria-label="Линейка"><svg width="22" height="22" viewBox="0 0 22 22"><path fill="#4d4d4d" d="M.8 14.300 14.600.8q1-.8 2 0l4.500 4.500q.8 1 0 2L7.400 21q-1 .8-2 0L.8 16.300q-.8-1 0-2z"/><path stroke="#fff" stroke-width="1.500" d="m4 12 3 3M7 9l2 2M10 6l3 3M13 3l2 2"/></svg></button>
  <button type="button" class="jam"><svg width="28" height="28" viewBox="0 0 28 28"><circle cx="14" cy="14" r="12.500" fill="none" stroke="#4d4d4d" stroke-width="2"/><path fill="#4d4d4d" d="M1 9C4 2 10 0 15 0c7 1 12 6 13 14-3-7-7-10-13-10C9 4 4 7 1 14z"/></svg><span>Пробки</span></button>
</div>
<div class="tools zoom">
  <button type="button" aria-label="Приблизить"><svg width="18" height="18" viewBox="0 0 18 18"><path stroke="#4d4d4d" stroke-width="2" d="M1 9h16M9 1v16"/></svg></button>
  <button type="button" aria-label="Отдалить"><svg width="18" height="18" viewBox="0 0 18 18"><path stroke="#4d4d4d" stroke-width="2" d="M1 9h16"/></svg></button>
</div>
<div class="tools geo"><button type="button" aria-label="Моё местоположение"><svg width="22" height="22" viewBox="0 0 22 22"><path fill="#4d4d4d" d="M21 1 12 21.500l-2.500-8.500L1 10.500z"/></svg></button></div>
<div class="tools open"><a href="#map"><svg width="22" height="28" viewBox="0 0 22 28"><path fill="#fc4232" d="M11 1a10.500 10.500 0 0 1 10.500 10.500c0 7-6 8-9 15.500-.5 1-2.500 1-3 0-3-7.500-9-8.500-9-15.500A10.500 10.500 0 0 1 11 1z"/><circle cx="11" cy="11.500" r="3.500" fill="#fff"/></svg><span>Открыть в Яндекс Картах</span></a></div>
<div class="legal"><a href="#yandex">© Яндекс</a><a href="#terms">Условия использования</a></div>
<div class="scale"><span>50 м</span></div>`);
</script>
</body>
</html>
